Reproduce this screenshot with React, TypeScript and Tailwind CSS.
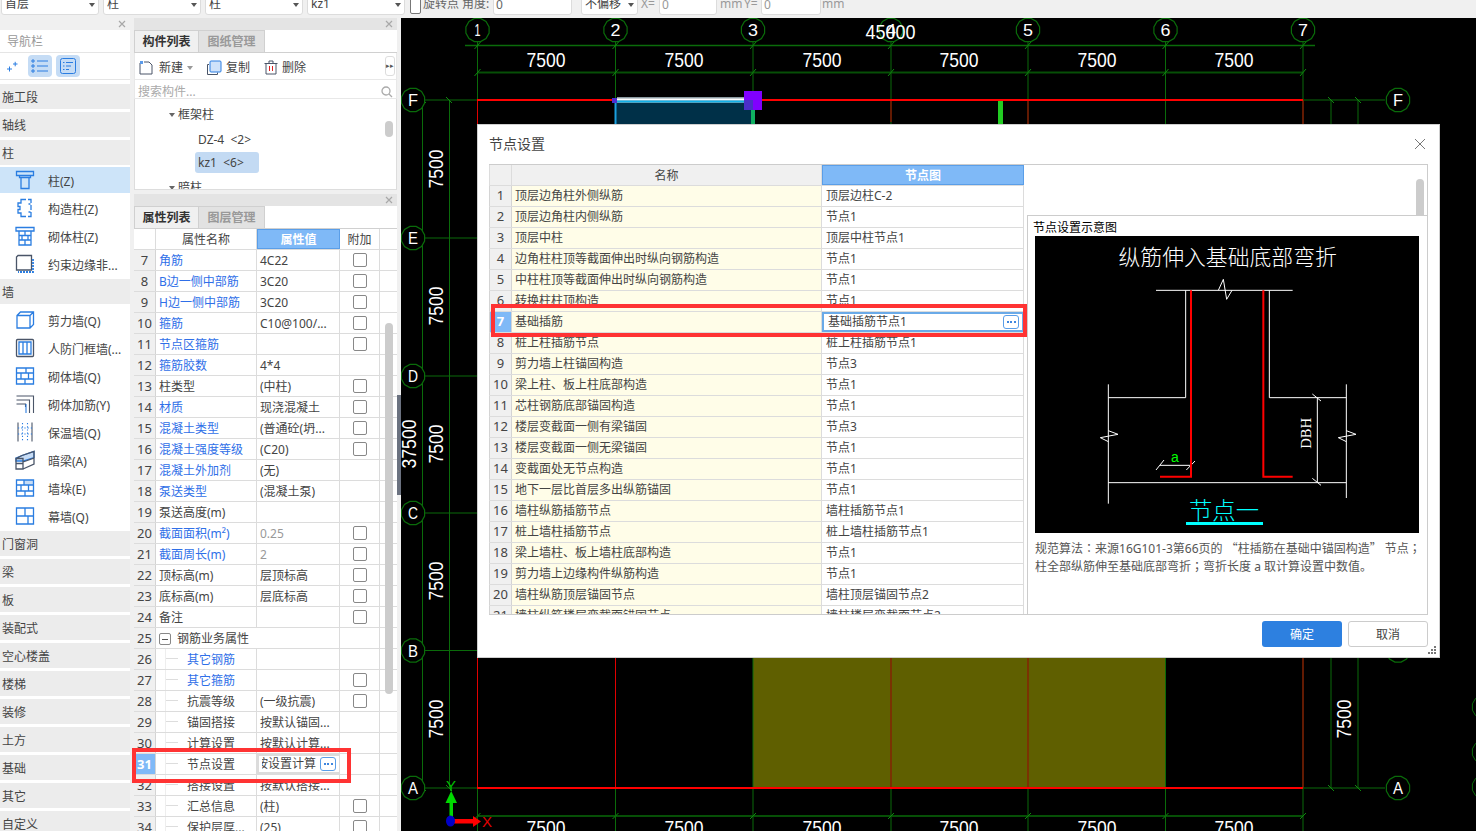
import { ReactNode } from "react";

const BLUE = "#2a7de1";

interface PropRow {
  no: number;
  name: string;
  value?: string;
  link?: boolean;
  check?: boolean;
  muted?: boolean;
  child?: boolean;
  group?: boolean;
  active?: boolean;
}

const propRows: PropRow[] = [
  { no: 7, name: "角筋", value: "4C22", link: true, check: true },
  { no: 8, name: "B边一侧中部筋", value: "3C20", link: true, check: true },
  { no: 9, name: "H边一侧中部筋", value: "3C20", link: true, check: true },
  { no: 10, name: "箍筋", value: "C10@100/...", link: true, check: true },
  { no: 11, name: "节点区箍筋", link: true, check: true },
  { no: 12, name: "箍筋胶数", value: "4*4", link: true },
  { no: 13, name: "柱类型", value: "(中柱)", check: true },
  { no: 14, name: "材质", value: "现浇混凝土", link: true, check: true },
  { no: 15, name: "混凝土类型", value: "(普通砼(坍...", link: true, check: true },
  { no: 16, name: "混凝土强度等级", value: "(C20)", link: true, check: true },
  { no: 17, name: "混凝土外加剂", value: "(无)", link: true },
  { no: 18, name: "泵送类型", value: "(混凝土泵)", link: true },
  { no: 19, name: "泵送高度(m)" },
  { no: 20, name: "截面面积(m²)", value: "0.25", link: true, check: true, muted: true },
  { no: 21, name: "截面周长(m)", value: "2", link: true, check: true, muted: true },
  { no: 22, name: "顶标高(m)", value: "层顶标高", check: true },
  { no: 23, name: "底标高(m)", value: "层底标高", check: true },
  { no: 24, name: "备注", check: true },
  { no: 25, name: "钢筋业务属性", group: true },
  { no: 26, name: "其它钢筋", link: true, child: true },
  { no: 27, name: "其它箍筋", link: true, child: true, check: true },
  { no: 28, name: "抗震等级", value: "(一级抗震)", child: true, check: true },
  { no: 29, name: "锚固搭接", value: "按默认锚固...", child: true },
  { no: 30, name: "计算设置", value: "按默认计算...", child: true },
  { no: 31, name: "节点设置", value: "按设置计算", child: true, active: true },
  { no: 32, name: "搭接设置", value: "按默认搭接...", child: true },
  { no: 33, name: "汇总信息", value: "(柱)", child: true, check: true },
  { no: 34, name: "保护层厚...", value: "(25)", child: true, check: true },
];

const nodeRows = [
  ["顶层边角柱外侧纵筋", "顶层边柱C-2"],
  ["顶层边角柱内侧纵筋", "节点1"],
  ["顶层中柱", "顶层中柱节点1"],
  ["边角柱柱顶等截面伸出时纵向钢筋构造", "节点1"],
  ["中柱柱顶等截面伸出时纵向钢筋构造", "节点1"],
  ["转换柱柱顶构造", "节点1"],
  ["基础插筋", "基础插筋节点1"],
  ["桩上柱插筋节点", "桩上柱插筋节点1"],
  ["剪力墙上柱锚固构造", "节点3"],
  ["梁上柱、板上柱底部构造", "节点1"],
  ["芯柱钢筋底部锚固构造", "节点1"],
  ["楼层变截面一侧有梁锚固", "节点3"],
  ["楼层变截面一侧无梁锚固", "节点1"],
  ["变截面处无节点构造", "节点1"],
  ["地下一层比首层多出纵筋锚固", "节点1"],
  ["墙柱纵筋插筋节点", "墙柱插筋节点1"],
  ["桩上墙柱插筋节点", "桩上墙柱插筋节点1"],
  ["梁上墙柱、板上墙柱底部构造", "节点1"],
  ["剪力墙上边缘构件纵筋构造", "节点1"],
  ["墙柱纵筋顶层锚固节点", "墙柱顶层锚固节点2"],
  ["墙柱纵筋楼层变截面锚固节点", "墙柱楼层变截面节点2"],
];

const Glyph = ({ children }: { children: ReactNode }) => (
  <svg width="20" height="20" viewBox="0 0 20 20" fill="none" stroke={BLUE} strokeWidth="1.3" className="shrink-0">
    {children}
  </svg>
);

const navIcons: Record<string, ReactNode> = {
  column: (
    <Glyph>
      <path d="M1.5 1.5h17v4h-17zM4.5 5.5v2h11v-2M6 7.5v11h8v-11" />
    </Glyph>
  ),
  structural: (
    <Glyph>
      <path d="M11 1.500h-5v3.500h-3v3.500h2v3h-2v3.500h3v3.500h5" />
      <path d="M13 1.500h3v3.500M16 7v5M16 14v4.500h-3M13.500 6h2M13.500 14h2" />
    </Glyph>
  ),
  masonryColumn: (
    <Glyph>
      <path d="M1 1.500h18v3.500h-18zM4 5v14h12v-14M4 9.500h12M4 14h12M10 5v4.500M7 9.500v4.500M13 9.500v4.500M10 14v5" />
    </Glyph>
  ),
  edge: (
    <Glyph>
      <path stroke="#4a5568" d="M3 1.500h13.500v14.500h-15v-13z" />
      <path d="M18 5v13h-15" strokeDasharray="2 1" strokeWidth="1.800" />
    </Glyph>
  ),
  shear: (
    <Glyph>
      <path d="M2 5.500l3.500-3.500h13v12.500l-3.500 3.500h-13zM2 5.500h13v12.500M15 5.500l3.500-3.500" />
    </Glyph>
  ),
  civil: (
    <Glyph>
      <rect x="1.500" y="1.500" width="17" height="17" rx="1" stroke="#4a5568" />
      <path d="M4 4h12v12h-12zM8 4v12M12 4v12" />
    </Glyph>
  ),
  masonry: (
    <Glyph>
      <path d="M1.500 2h17v16h-17zM1.500 7h17M1.500 13h17M11 2v5M6 7v6M13.500 7v6M10 13v5" />
    </Glyph>
  ),
  rebar: (
    <Glyph>
      <path stroke="#4a5568" d="M1.500 2h17v17M1.500 6h13v13M1.500 10h9v3" strokeWidth="1.100" />
      <path d="M11 10v9" strokeWidth="1.100" />
    </Glyph>
  ),
  insulation: (
    <Glyph>
      <path stroke="#4a5568" d="M3 0.500v19M17 0.500v19" strokeWidth="1.100" />
      <path d="M7.500 1v18M12.500 1v18M3 6h14M3 12h14" strokeDasharray="1.200 2" strokeWidth="1.100" />
    </Glyph>
  ),
  beam: (
    <Glyph>
      <path fill="#c7dcf5" d="M1 8l6-2.500 12-4v6l-11 3.500h-7z" />
      <path stroke="#4a5568" d="M1 8.500h7v10.500h-7zM1 13.500h7M8 12l11-4v-6.500l-12 4-6 3M8 19l11-5v-6" />
    </Glyph>
  ),
  pier: (
    <Glyph>
      <path fill="#c7dcf5" stroke="none" d="M9 2h9.500v5h-9.500z" />
      <path d="M1.500 2h17v16h-17zM1.500 7h17M1.500 13h17M9 2v5M6 7v6M13.500 7v6M10 13v5" />
    </Glyph>
  ),
  curtain: (
    <Glyph>
      <path d="M1.500 2h17v16h-17zM1.500 10h17M10 2v8M13 10v8" />
    </Glyph>
  ),
};

const columnItems = [
  { icon: "column", label: "柱(Z)", active: true },
  { icon: "structural", label: "构造柱(Z)" },
  { icon: "masonryColumn", label: "砌体柱(Z)" },
  { icon: "edge", label: "约束边缘非..." },
];

const wallItems = [
  { icon: "shear", label: "剪力墙(Q)" },
  { icon: "civil", label: "人防门框墙(..." },
  { icon: "masonry", label: "砌体墙(Q)" },
  { icon: "rebar", label: "砌体加筋(Y)" },
  { icon: "insulation", label: "保温墙(Q)" },
  { icon: "beam", label: "暗梁(A)" },
  { icon: "pier", label: "墙垛(E)" },
  { icon: "curtain", label: "幕墙(Q)" },
];

const bottomSections = ["门窗洞", "梁", "板", "装配式", "空心楼盖", "楼梯", "装修", "土方", "基础", "其它", "自定义"];

const Caret = () => (
  <span className="w-0 h-0 mb-[4px] border-x-[3px] border-x-transparent border-t-[4px] border-t-[#555] shrink-0" />
);

const Combo = ({ text, className }: { text?: string; className: string }) => (
  <div className={`h-[26px] pb-[3px] flex items-end justify-between bg-white border border-[#dcdcdc] rounded-[3px] px-[3px] text-[#444] ${className}`}>
    <span>{text}</span>
    <Caret />
  </div>
);

const TopBar = () => (
  <div className="h-[18px] flex items-end overflow-hidden bg-[#f0f0f0] text-[#666] leading-[14px]">
    <div className="flex items-end gap-[4px] pl-px mb-[3px]">
      <Combo text="首层" className="w-[98px]" />
      <Combo text="柱" className="w-[98px]" />
      <Combo text="柱" className="w-[98px]" />
      <Combo text="kz1" className="w-[98px]" />
    </div>
    <div className="flex items-end mb-[3px] ml-[5px]">
      <div className="w-[11px] h-[16px] border border-[#777] rounded-[2px] bg-white mb-[1px] mr-[2px]" />
      <span className="mb-[4px] w-[70px]">旋转点 角度:</span>
      <div className="w-[79px] h-[26px] bg-white border border-[#dcdcdc] rounded-[3px] pl-[2px] pt-[8px]">0</div>
      <span className="w-[9px] pl-[2px] mb-[8px] text-[10px]">°</span>
      <Combo text="不偏移" className="w-[57px] ml-0" />
      <span className="ml-[3px] w-[18px] mb-[4px] text-[#999]">X=</span>
      <div className="w-[58px] h-[26px] bg-white border border-[#dcdcdc] rounded-[3px] pl-[2px] pt-[8px] text-[#999]">0</div>
      <span className="ml-[3px] w-[24px] mb-[4px] text-[#999]">mm</span>
      <span className="w-[17px] mb-[4px] text-[#999]">Y=</span>
      <div className="w-[60px] h-[26px] bg-white border border-[#dcdcdc] rounded-[3px] pl-[2px] pt-[8px] text-[#999]">0</div>
      <span className="ml-px mb-[4px] text-[#999]">mm</span>
    </div>
  </div>
);

const CloseBar = ({ className }: { className: string }) => (
  <div className={`h-[12px] shrink-0 flex items-center justify-end pr-[4px] ${className}`}>
    <svg width="8" height="8" viewBox="0 0 8 8" stroke="#a8a8a8" strokeWidth="1.200">
      <path d="M1 1l6 6M7 1l-6 6" />
    </svg>
  </div>
);

const Section = ({ label }: { label: string }) => (
  <div className="h-[25px] mb-[3px] pl-[2px] pt-[2px] flex items-center bg-[#ececec] text-[#444]">{label}</div>
);

const NavItem = ({ icon, label, active }: { icon: string; label: string; active?: boolean }) => (
  <div className={`flex items-center pl-[15px] gap-[13px] text-[#444] ${active ? "h-[26px] my-px bg-[#cde4f9]" : "h-[28px]"}`}>
    {navIcons[icon]}
    <span className="whitespace-nowrap pt-[3px]">{label}</span>
  </div>
);

const NavPanel = () => (
  <div className="w-[130px] bg-white overflow-hidden shrink-0">
    <CloseBar className="bg-[#f0f0f0]" />
    <div className="h-[23px] pl-[7px] pt-[2px] flex items-center text-[#999] border-b border-[#e5e5e5]">导航栏</div>
    <div className="h-[27px] flex items-center border-b border-[#e5e5e5] gap-[4px] pl-[28px] relative">
      <svg width="12" height="12" viewBox="0 0 12 12" stroke={BLUE} className="absolute left-[6px] top-[8px]">
        <path d="M1 8h5M3.500 5.500v5M7 3h4.500M9.200 0.800v4.500" />
      </svg>
      <div className="w-[24px] h-[22px] rounded-[4px] bg-[#c5dcf5] flex items-center justify-center">
        <svg width="18" height="14" viewBox="0 0 18 14" fill="none" stroke={BLUE}>
          <path d="M6 2h11M6 7h11M6 12h11" />
          <path d="M1 1h2v2h-2zM1 6h2v2h-2zM1 11h2v2h-2z" />
        </svg>
      </div>
      <div className="w-[24px] h-[22px] rounded-[4px] bg-[#c5dcf5] flex items-center justify-center">
        <svg width="16" height="16" viewBox="0 0 16 16" fill="none" stroke={BLUE}>
          <rect x="0.500" y="0.500" width="15" height="15" rx="2" />
          <path d="M3 4.500h1.500M6 4.500h7M3 8h1.500M6 8h5M3 11.500h1.500M6 11.500h3" />
        </svg>
      </div>
    </div>
    <div className="pt-[4px]">
      <Section label="施工段" />
      <Section label="轴线" />
      <Section label="柱" />
      <div className="-mt-px mb-px">
        {columnItems.map((item) => (
          <NavItem key={item.label} {...item} />
        ))}
      </div>
      <Section label="墙" />
      <div className="-mt-px mb-px">
        {wallItems.map((item) => (
          <NavItem key={item.label} {...item} />
        ))}
      </div>
      {bottomSections.map((s) => (
        <Section key={s} label={s} />
      ))}
    </div>
  </div>
);

const Tabs = ({ first, second }: { first: string; second: string }) => (
  <div className="h-[23px] flex bg-white border-b border-[#d0d0d0] shrink-0">
    <div className="w-[65px] flex items-center justify-center bg-[#f0f0f0] font-bold text-[#333] border border-b-0 border-[#d0d0d0]">{first}</div>
    <div className="w-[66px] flex items-center justify-center bg-[#e2e2e2] font-bold text-[#999] border-t border-r border-[#d0d0d0]">{second}</div>
  </div>
);

const ListPanel = () => (
  <div className="h-[172px] flex flex-col bg-white shrink-0 overflow-hidden">
    <CloseBar className="bg-[#e4e4e4]" />
    <Tabs first="构件列表" second="图纸管理" />
    <div className="h-[27px] flex items-center pl-[4px] pt-[3px] border-b border-[#e8e8e8] border-x text-[#444] relative">
      <svg width="15" height="15" viewBox="0 0 15 15" fill="none" stroke="#4a5568" className="mr-[5px]">
        <path d="M1 3v11h12v-9l-3-3h-5" />
        <path d="M1 1h3v3h-3z" fill="#5b9bea" stroke="none" />
      </svg>
      <span>新建</span>
      <span className="ml-[4px] mr-[13px] w-0 h-0 border-x-[3px] border-x-transparent border-t-[4px] border-t-[#999]" />
      <svg width="16" height="16" viewBox="0 0 16 16" fill="none" stroke="#4a5568" className="mr-[4px]">
        <path d="M3 4.500h-1.500v10h10v-2" />
        <rect x="4" y="1" width="11" height="11" rx="1" fill="#cfe2fa" stroke={BLUE} />
      </svg>
      <span>复制</span>
      <svg width="14" height="15" viewBox="0 0 14 15" fill="none" stroke="#4a5568" className="ml-[14px] mr-[4px]">
        <path d="M2 3.500v10.500h10v-10.500M0.500 3.500h13M5 3.500v-2.500h4v2.500" />
        <path d="M5.500 6v5M8.500 6v5" stroke="#e02020" />
      </svg>
      <span>删除</span>
      <div className="absolute left-[250px] top-[3px] w-[10px] h-[20px] border border-[#ddd] rounded-[3px] flex items-center justify-center text-[7px] text-[#555]">▸▸</div>
    </div>
    <div className="h-[19px] flex items-center justify-between px-[3px] pt-[5px] border-b border-[#e8e8e8] border-x text-[#aaa]">
      <span>搜索构件...</span>
      <svg width="12" height="12" viewBox="0 0 12 12" fill="none" stroke="#aaa" strokeWidth="1.300">
        <circle cx="5" cy="5" r="4" />
        <path d="M8 8l3 3" />
      </svg>
    </div>
    <div className="flex-1 pt-px border-x border-b border-[#ddd] relative text-[#444] overflow-hidden">
      <div className="h-[28px] pl-[34px] pt-[2px] flex items-center gap-[3px]">
        <span className="w-0 h-0 border-x-[3px] border-x-transparent border-t-[4px] border-t-[#666]" />
        <span>框架柱</span>
      </div>
      <div className="h-[24px] pl-[63px] flex items-center">DZ-4&nbsp;&nbsp;&lt;2&gt;</div>
      <div className="ml-[60px] w-[64px] h-[21px] pl-[3px] flex items-center bg-[#c3daf3] rounded-[3px]">kz1&nbsp;&nbsp;&lt;6&gt;</div>
      <div className="h-[24px] pl-[34px] pt-[5px] flex items-center gap-[3px]">
        <span className="w-0 h-0 border-x-[3px] border-x-transparent border-t-[4px] border-t-[#666]" />
        <span>暗柱</span>
      </div>
      <div className="absolute left-[250px] top-[22px] w-[8px] h-[16px] bg-[#ccc] rounded-full" />
    </div>
  </div>
);

const Ellipsis = () => (
  <div className="w-[16px] h-[14px] rounded-[3px] border border-[#5a9ee8] bg-white flex items-center justify-center gap-[1.500px] shrink-0">
    <span className="w-[2px] h-[2px] bg-[#3f86de]" />
    <span className="w-[2px] h-[2px] bg-[#3f86de]" />
    <span className="w-[2px] h-[2px] bg-[#3f86de]" />
  </div>
);

const PropTableRow = ({ row }: { row: PropRow }) => (
  <div className="h-[21px] flex shrink-0 border-b border-[#dcdcdc]">
    <div className={`w-[22px] pt-[2px] flex items-center justify-center border-r border-[#d4d4d4] text-[13px] ${row.active ? "bg-[#7fb9f7] text-white font-bold" : "bg-[#f0f0f0] text-[#444]"}`}>
      {row.no}
    </div>
    <div className={`w-[101px] pt-[2px] flex items-center border-r border-[#dcdcdc] relative whitespace-nowrap ${row.link ? "text-[#2f6fe8]" : "text-[#444]"} ${row.child ? "pl-[31px]" : "pl-[3px]"} ${row.group ? "border-r-0" : ""}`}>
      {row.child && <span className="absolute left-[10px] top-[9px] w-[12px] h-px bg-[#ddd]" />}
      {row.child && <span className="absolute left-[9px] top-0 bottom-0 w-px bg-[#eee]" />}
      {row.group && (
        <span className="w-[12px] h-[12px] border border-[#888] rounded-[2px] mr-[6px] flex items-center justify-center">
          <span className="w-[6px] h-px bg-[#555]" />
        </span>
      )}
      {row.name}
    </div>
    <div className={`w-[83px] flex items-center border-r border-[#dcdcdc] whitespace-nowrap overflow-hidden ${row.muted ? "text-[#999]" : "text-[#444]"} ${row.active ? "border-2 border-[#6aaae8] pl-0 pr-[3px] justify-end gap-[4px]" : "pl-[3px] pt-[2px]"}`}>
      {row.active ? (
        <>
          <span className="overflow-hidden w-[54px] flex justify-end">{row.value}</span>
          <Ellipsis />
        </>
      ) : (
        row.value
      )}
    </div>
    <div className="w-[40px] flex items-center justify-center border-r border-[#dcdcdc]">
      {row.check && <span className="w-[14px] h-[14px] border border-[#888] rounded-[2px]" />}
    </div>
  </div>
);

const PropertyPanel = () => (
  <div className="flex-1 min-h-0 flex flex-col bg-white relative">
    <CloseBar className="bg-[#e4e4e4]" />
    <Tabs first="属性列表" second="图层管理" />
    <div className="h-[21px] flex shrink-0 border-b border-[#dcdcdc] text-[#444]">
      <div className="w-[22px] border-r border-[#dcdcdc]" />
      <div className="w-[101px] pt-[2px] flex items-center justify-center border-r border-[#dcdcdc]">属性名称</div>
      <div className="w-[83px] pt-[2px] flex items-center justify-center bg-[#7fb9f7] text-white font-bold border border-[#5a9ee8]">属性值</div>
      <div className="w-[40px] pt-[2px] flex items-center justify-center border-r border-[#dcdcdc]">附加</div>
    </div>
    {propRows.map((row) => (
      <PropTableRow key={row.no} row={row} />
    ))}
    <div className="absolute left-[251px] top-[129px] w-[8px] h-[371px] bg-[#ccc] rounded-full" />
    <div className="absolute left-[-2px] top-[554px] w-[219px] h-[35px] border-[4px] border-[#ff3333]" />
  </div>
);

const polygonPoints = (cx: number, cy: number, r: number) =>
  Array.from({ length: 12 }, (_, i) => {
    const a = (i * Math.PI) / 6 + Math.PI / 12;
    return `${(cx + r * Math.cos(a)).toFixed(1)},${(cy + r * Math.sin(a)).toFixed(1)}`;
  }).join(" ");

const Bubble = ({ x, y, label }: { x: number; y: number; label: string }) => (
  <g>
    <polygon points={polygonPoints(x, y, 12)} fill="#000" stroke="#0a6b0a" strokeWidth="1.200" />
    <text x={x} y={y + 6} fill="#fff" fontSize="17" textAnchor="middle" fontFamily="Liberation Sans" lengthAdjust="spacingAndGlyphs" textLength={label === "1" ? 6 : 10}>
      {label}
    </text>
  </g>
);

const xAxes = [477.5, 615.5, 753, 891, 1028, 1165.5, 1303];
const yAxes: [number, string][] = [
  [100, "F"],
  [238, "E"],
  [376, "D"],
  [513, "C"],
  [650.5, "B"],
  [788, "A"],
];
const topTexts = [546, 684, 822, 959, 1097, 1234];
const leftTexts = [169, 306, 444, 581, 719];

const Canvas = () => (
  <svg viewBox="401 18 1075 813" width="1075" height="813" className="block absolute inset-0">
    <rect x="753" y="658" width="412.500" height="130" fill="#5f5f00" />
    <rect x="616" y="101" width="137" height="30" fill="#003048" />
    {xAxes.map((x) => (
      <line key={x} x1={x} x2={x} y1={42} y2={831} stroke="#0a6b0a" />
    ))}
    <g stroke="#c00000">
      <line x1="477.500" x2="477.500" y1="100" y2="788" stroke="#e00000" />
      <line x1="615.500" x2="615.500" y1="658" y2="788" stroke="#e00000" />
      <line x1="891" x2="891" y1="100" y2="122" />
      <line x1="891" x2="891" y1="658" y2="788" />
      <line x1="1028" x2="1028" y1="100" y2="788" />
      <line x1="1303" x2="1303" y1="100" y2="788" />
    </g>
    <line x1="465" x2="1315" y1="45.500" y2="45.500" stroke="#0a6b0a" strokeWidth="1.500" />
    <line x1="477" x2="1303" y1="72.500" y2="72.500" stroke="#064f06" strokeWidth="2" />
    <line x1="477" x2="1303" y1="816" y2="816" stroke="#064f06" strokeWidth="2" />
    <line x1="422.500" x2="422.500" y1="100" y2="788" stroke="#0a6b0a" />
    <line x1="449.500" x2="449.500" y1="100" y2="788" stroke="#0a6b0a" />
    <line x1="1331" x2="1331" y1="100" y2="788" stroke="#0a6b0a" />
    <line x1="1358" x2="1358" y1="100" y2="788" stroke="#0a6b0a" />
    {yAxes.map(([y]) => (
      <line key={y} x1="425" x2="1385" y1={y} y2={y} stroke="#0a6b0a" />
    ))}
    {xAxes.map((x) => (
      <g key={x} stroke="#0f8a0f">
        <line x1={x - 3} x2={x + 3} y1={49} y2={42} />
        <line x1={x - 3} x2={x + 3} y1={76} y2={69} />
        <line x1={x - 3} x2={x + 3} y1={819} y2={813} />
      </g>
    ))}
    {[100, 788].map((y) => (
      <g key={y} stroke="#0f8a0f">
        <line x1="1328" x2="1334" y1={y - 3} y2={y + 3} />
        <line x1="1355" x2="1361" y1={y - 3} y2={y + 3} />
        <line x1="420" x2="426" y1={y - 3} y2={y + 3} />
        <line x1="446" x2="452" y1={y - 3} y2={y + 3} />
      </g>
    ))}
    <line x1="477" x2="1303" y1="100" y2="100" stroke="#ff0000" strokeWidth="2" />
    <line x1="477" x2="1303" y1="788" y2="788" stroke="#ff0000" strokeWidth="2" />
    <rect x="614.500" y="100" width="2" height="30" fill="#1aa0e0" />
    <rect x="617" y="97" width="135" height="6" fill="#8a9aa0" />
    <rect x="617" y="98.500" width="135" height="2" fill="#ffffff" />
    <rect x="617" y="100.500" width="135" height="2" fill="#12b0e8" />
    <rect x="612" y="98" width="5" height="5" fill="#4a2fd0" />
    <rect x="744" y="91" width="18" height="19" fill="#8000ff" />
    <rect x="744" y="100" width="9" height="10" fill="#4b2fc8" />
    <rect x="751" y="110" width="4" height="20" fill="#10b060" />
    <rect x="998" y="101" width="5" height="30" fill="#22cc22" />
    <rect x="401" y="647" width="3" height="7" fill="#8000ff" />
    {xAxes.map((x, i) => (
      <Bubble key={x} x={x} y={30} label={String(i + 1)} />
    ))}
    {yAxes.map(([y, label]) => (
      <Bubble key={label} x={413} y={y} label={label} />
    ))}
    <Bubble x={1398} y={100} label="F" />
    <Bubble x={1398} y={650.500} label="B" />
    <Bubble x={1398} y={788} label="A" />
    <polygon points={polygonPoints(1484, 707, 12)} stroke="#0a6b0a" />
    <polygon points={polygonPoints(1484, 752, 12)} stroke="#0a6b0a" />
    <polygon points={polygonPoints(1484, 787, 12)} stroke="#0a6b0a" />
    <g fill="#fff" fontSize="21" fontFamily="Liberation Sans" textAnchor="middle" lengthAdjust="spacingAndGlyphs">
      <text x="890.500" y="39" textLength="50" lengthAdjust="spacingAndGlyphs">45000</text>
      {topTexts.map((x) => (
        <text key={x} x={x} y="67" textLength="39" lengthAdjust="spacingAndGlyphs">7500</text>
      ))}
      {topTexts.map((x) => (
        <text key={x} x={x} y="835" textLength="39" lengthAdjust="spacingAndGlyphs">7500</text>
      ))}
      {leftTexts.map((y) => (
        <text key={y} x={0} y={0} transform={`translate(443 ${y}) rotate(-90)`} textLength="39" lengthAdjust="spacingAndGlyphs">7500</text>
      ))}
      <text transform="translate(1351 719) rotate(-90)" textLength="39" lengthAdjust="spacingAndGlyphs">7500</text>
      <text transform="translate(415.500 444) rotate(-90)" textLength="49" lengthAdjust="spacingAndGlyphs">37500</text>
    </g>
    <rect x="449.500" y="802" width="3.500" height="16" fill="#00d800" />
    <polygon points="445.500,803 457,803 451.200,791" fill="#00d800" />
    <text x="451" y="791" fill="#00c000" fontSize="15" textAnchor="middle" fontFamily="Liberation Sans">Y</text>
    <rect x="454" y="819" width="20" height="4.500" fill="#ff0000" />
    <polygon points="473,816 473,827 481,821.500" fill="#ff0000" />
    <text x="487" y="827" fill="#e00000" fontSize="15" textAnchor="middle" fontFamily="Liberation Sans">X</text>
    <ellipse cx="450.500" cy="821" rx="4.500" ry="5.500" fill="#0000c8" />
  </svg>
);

const NodeDiagram = () => (
  <svg viewBox="30 198 1152 891" width="384" height="297" className="block">
    <rect x="30" y="198" width="1152" height="891" fill="#000" />
    <g stroke="#fff" strokeWidth="3" fill="none">
      <path d="M393 361h410M482 361v322h-232M250 643v358M733 361v322h231M964 643v341M250 938h714" />
      <path d="M580 361l15-33 10 60 16-27M250 815l-24-12 53-10-29-11M964 815l-24-12 53-10-29-11" />
      <path d="M877 683v255M862 672l26 21M862 925l26 21M405 886h93M393 900l24-30M484 900l26-27" />
    </g>
    <path d="M498 361v559h-93M715 361v559h88" stroke="#ff0000" strokeWidth="6" fill="none" />
    <text x="608" y="285" fill="#fff" fontSize="65.500" textAnchor="middle" fontFamily="Noto Sans CJK SC" fontWeight="300">纵筋伸入基础底部弯折</text>
    <text x="450" y="876" fill="#00ff00" fontSize="42" textAnchor="middle" fontFamily="Liberation Sans">a</text>
    <text transform="translate(858 790) rotate(-90)" fill="#fff" fontSize="44" textAnchor="middle" fontFamily="Liberation Serif">DBH</text>
    <text x="597" y="1046" fill="#00ffff" fontSize="70" textAnchor="middle" fontFamily="Noto Sans CJK SC" fontWeight="300">节点一</text>
    <rect x="483" y="1056" width="231" height="9" fill="#00ffff" />
  </svg>
);

const NodeDialog = () => (
  <div className="absolute left-[76px] top-[106px] w-[963px] h-[534px] bg-white border border-[#cfcfcf] flex flex-col text-[#444]">
    <div className="h-[39px] shrink-0 flex items-center justify-between pl-[11px] pr-[13px] pb-[2px] text-[14px]">
      <span>节点设置</span>
      <svg width="12" height="12" viewBox="0 0 12 12" stroke="#777" strokeWidth="1">
        <path d="M1 1l10 10M11 1l-10 10" />
      </svg>
    </div>
    <div className="h-[451px] mx-[11px] shrink-0 flex border-b border-[#ccc] border-t relative">
      <div className="w-[535px] overflow-hidden shrink-0">
        <div className="h-[21px] flex border-b border-[#dcdcdc]">
          <div className="w-[23px] bg-[#f0f0f0] border-x border-[#dcdcdc]" />
          <div className="w-[310px] pt-[2px] bg-[#f0f0f0] flex items-center justify-center border-r border-[#dcdcdc]">名称</div>
          <div className="w-[202px] pt-[2px] bg-[#7fb9f7] text-white font-bold flex items-center justify-center border border-[#5a9ee8]">节点图</div>
        </div>
        {nodeRows.map(([name, node], i) => (
          <div key={name} className="h-[21px] flex border-b border-[#dcdcdc]">
            <div className={`w-[23px] flex items-center justify-center border-x border-[#d4d4d4] text-[13px] ${i === 6 ? "bg-[#7fb9f7] text-white font-bold" : "bg-[#f0f0f0]"}`}>{i + 1}</div>
            <div className="w-[310px] bg-[#fffde8] pl-[3px] flex items-center border-r border-[#dcdcdc] whitespace-nowrap">{name}</div>
            {i === 6 ? (
              <div className="w-[202px] flex items-center justify-between border-2 border-[#6aaae8] pl-[4px] pr-[3px]">
                <span>{node}</span>
                <Ellipsis />
              </div>
            ) : (
              <div className="w-[202px] pl-[4px] flex items-center border-r border-[#dcdcdc] whitespace-nowrap">{node}</div>
            )}
          </div>
        ))}
      </div>
      <div className="flex-1 flex flex-col border-r border-[#ccc]">
        <div className="h-[50px] shrink-0 relative">
          <div className="absolute right-[3px] top-[14px] w-[8px] h-[36px] bg-[#ccc] rounded-t-full" />
        </div>
        <div className="flex-1 ml-[3px] border-l border-t border-[#ccc] pl-[7px] flex flex-col overflow-hidden">
          <div className="h-[20px] shrink-0 -ml-[2px] flex items-end leading-[16px] text-black">节点设置示意图</div>
          <NodeDiagram />
          <p className="mt-[6px] w-[384px] text-[12px] leading-[17px] text-[#555] whitespace-nowrap">
            规范算法<span className="font-['Noto_Sans_CJK_TC',sans-serif]">：</span>来源16G101-3第66页的 <span className="font-['Noto_Sans_CJK_SC',sans-serif]">“</span>柱插筋在基础中锚固构造<span className="font-['Noto_Sans_CJK_SC',sans-serif]">”</span> 节点<span className="font-['Noto_Sans_CJK_TC',sans-serif]">；</span>
            <br />
            柱全部纵筋伸至基础底部弯折<span className="font-['Noto_Sans_CJK_TC',sans-serif]">；</span>弯折长度 a 取计算设置中数值。
          </p>
        </div>
      </div>
      <div className="absolute left-[2px] top-[139px] w-[536px] h-[33px] border-[4px] border-[#ff3333]" />
    </div>
    <div className="flex-1 flex justify-end items-center gap-[6px] pr-[11px] pb-[5px]">
      <div className="w-[80px] h-[26px] pt-[2px] rounded-[3px] bg-[#2d80e0] text-white flex items-center justify-center">确定</div>
      <div className="w-[80px] h-[26px] pt-[2px] rounded-[3px] bg-white border border-[#ccc] flex items-center justify-center">取消</div>
    </div>
    <svg width="9" height="9" viewBox="0 0 9 9" fill="#777" className="absolute right-[2px] bottom-[2px]">
      <path d="M6 0h2v2h-2zM3 3h2v2h-2zM6 3h2v2h-2zM0 6h2v2h-2zM3 6h2v2h-2zM6 6h2v2h-2z" />
    </svg>
  </div>
);

export default function App() {
  return (
    <div className="w-[1476px] h-[831px] overflow-hidden flex flex-col bg-[#f0f0f0] text-[12px] font-['Noto_Sans','Noto_Sans_CJK_SC','Liberation_Sans',sans-serif]">
      <TopBar />
      <div className="flex-1 flex min-h-0">
        <NavPanel />
        <div className="w-[263px] ml-[4px] flex flex-col gap-[4px] shrink-0">
          <ListPanel />
          <PropertyPanel />
        </div>
        <div className="w-[4px] shrink-0 flex flex-col">
          <div className="h-[377px] shrink-0" />
          <div className="h-[100px] bg-[#6b7280] shrink-0" />
        </div>
        <div className="flex-1 relative bg-black overflow-hidden">
          <Canvas />
          <NodeDialog />
        </div>
      </div>
    </div>
  );
}
